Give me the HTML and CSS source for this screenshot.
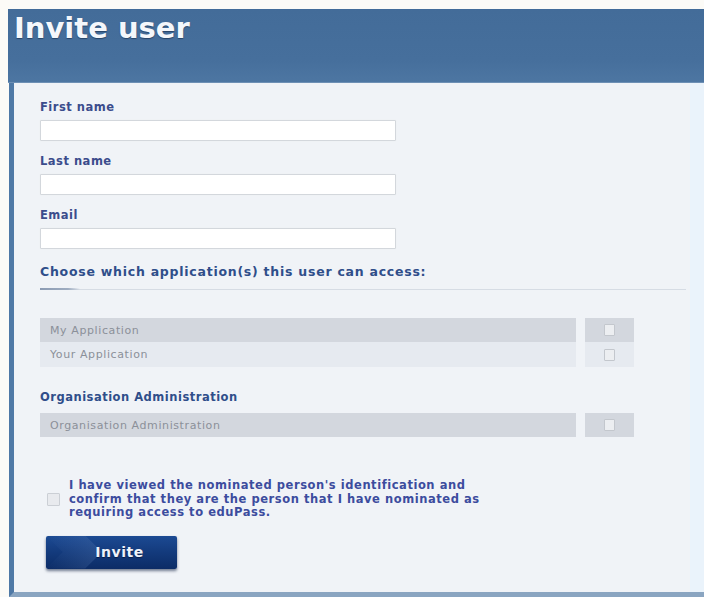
FILE: index.html
```html
<!DOCTYPE html>
<html lang="en">
<head>
<meta charset="utf-8">
<title>Invite user</title>
<link rel="stylesheet" href="styles.css">
</head>
<body>
<div class="page">
  <header class="title-bar">
    <h1>Invite user</h1>
  </header>

  <form class="panel">
    <div class="field">
      <label class="field-label" for="first">First name</label>
      <input class="text-input" id="first" type="text">
    </div>
    <div class="field">
      <label class="field-label" for="last">Last name</label>
      <input class="text-input" id="last" type="text">
    </div>
    <div class="field field-last">
      <label class="field-label" for="email">Email</label>
      <input class="text-input" id="email" type="text">
    </div>

    <h2 class="section-title">Choose which application(s) this user can access:</h2>
    <div class="rule"></div>

    <div class="app-list">
      <div class="app-row shade">
        <span class="app-name">My Application</span>
        <span class="app-check"><input type="checkbox" class="box"></span>
      </div>
      <div class="app-row light">
        <span class="app-name">Your Application</span>
        <span class="app-check"><input type="checkbox" class="box"></span>
      </div>
    </div>

    <h3 class="group-title">Organisation Administration</h3>
    <div class="app-list">
      <div class="app-row shade">
        <span class="app-name">Organisation Administration</span>
        <span class="app-check"><input type="checkbox" class="box"></span>
      </div>
    </div>

    <label class="confirm">
      <input type="checkbox" class="box confirm-box">
      <span class="confirm-text">I have viewed the nominated person's identification and<br>confirm that they are the person that I have nominated as<br>requiring access to eduPass.</span>
    </label>

    <button type="button" class="invite-btn"><span>Invite</span></button>
  </form>
</div>
</body>
</html>
```

FILE: styles.css
```css
* {
  box-sizing: border-box;
}

body {
  margin: 0;
  background: #fcfbf7;
  font-family: "DejaVu Sans", Verdana, sans-serif;
}

.page {
  padding-top: 9px;
}

/* blue title band */
.title-bar {
  margin-left: 8px;
  height: 74px;
  background: linear-gradient(to bottom, #436c99 0%, #466f9c 70%, #4d76a2 100%);
  border-bottom: 1px solid #6e90b5;
}

.title-bar h1 {
  margin: 0;
  padding: 2px 0 0 6px;
  font-size: 29px;
  line-height: 34px;
  font-weight: bold;
  color: #f4f7fb;
  text-shadow: 0 1px 1px rgba(20, 40, 70, 0.6);
}

/* form body; the pale strip down the right edge is part of the background */
.panel {
  margin: 0 0 0 9px;
  padding: 17px 0 23px 26px;
  background: linear-gradient(to right, #f0f3f7 calc(100% - 14px), #eaf3fb calc(100% - 14px));
  border-left: 5px solid #4f79a6;
  border-bottom: 5px solid #8aa5c1;
  display: flex;
  flex-direction: column;
  align-items: flex-start;
}

.field {
  display: flex;
  flex-direction: column;
  margin-bottom: 13px;
}

.field-last {
  margin-bottom: 0;
}

.field-label {
  font-size: 11.5px;
  letter-spacing: 0.5px;
  line-height: 14px;
  font-weight: bold;
  color: #3b4c8c;
  margin-bottom: 6px;
}

.text-input {
  width: 356px;
  height: 21px;
  background: #fff;
  border: 1px solid #d3d7dc;
  border-radius: 1px;
  box-shadow: 0 0 1px #e3e6ea;
  margin: 0;
}

.section-title {
  margin: 15px 0 0;
  font-size: 12.5px;
  letter-spacing: 0.75px;
  line-height: 16px;
  font-weight: bold;
  color: #2f4e8a;
}

.rule {
  margin-top: 9px;
  width: 646px;
  height: 1px;
  background: #d6dce4;
  position: relative;
}

.rule::before {
  content: "";
  position: absolute;
  left: 0;
  top: -1px;
  width: 40px;
  height: 2px;
  background: linear-gradient(to right, #8b9bb3, #9fadc1 70%, rgba(160, 174, 194, 0));
}

.app-list {
  margin-top: 28px;
  display: flex;
  flex-direction: column;
}

.app-row {
  display: grid;
  grid-template-columns: 536px 49px;
  column-gap: 9px;
  height: 24px;
}

.app-row + .app-row {
  height: 25px;
}

.app-name {
  display: flex;
  align-items: center;
  padding-left: 10px;
  font-size: 11px;
  letter-spacing: 0.6px;
  color: #8b9099;
}

.app-check {
  display: flex;
  align-items: center;
  justify-content: center;
}

.shade .app-name,
.shade .app-check {
  background: #d3d7de;
}

.light .app-name,
.light .app-check {
  background: #e6eaf0;
}

.box {
  appearance: none;
  -webkit-appearance: none;
  margin: 0;
  width: 11px;
  height: 12px;
  background: #eceef1;
  border: 1px solid #c3c7cd;
  border-radius: 1px;
}

.group-title {
  margin: 23px 0 0;
  font-size: 11.5px;
  letter-spacing: 0.5px;
  line-height: 14px;
  font-weight: bold;
  color: #2f4e8a;
}

.group-title + .app-list {
  margin-top: 9px;
}

.confirm {
  margin-top: 42px;
  display: flex;
  align-items: center;
  gap: 9px;
  padding-left: 7px;
}

.confirm-box {
  width: 13px;
  height: 13px;
  background: #e8eaee;
  border-color: #cbcfd5;
}

.confirm-text {
  font-size: 11.5px;
  letter-spacing: 0.55px;
  line-height: 13.5px;
  font-weight: bold;
  color: #3c4c9e;
}

.invite-btn {
  margin: 16px 0 0 6px;
  width: 131px;
  height: 33px;
  border: 0;
  border-radius: 2px;
  padding: 0 0 0 16px;
  position: relative;
  overflow: hidden;
  background: linear-gradient(to bottom, #1c4a93 0%, #133a7c 50%, #0c2c66 100%);
  box-shadow: 0 2px 3px rgba(10, 25, 60, 0.55);
  font-family: "DejaVu Sans", Verdana, sans-serif;
  font-size: 14px;
  letter-spacing: 0.5px;
  font-weight: bold;
  color: #eef2fa;
  text-shadow: 0 1px 1px rgba(0, 10, 40, 0.6);
}

/* lighter chevron on the left of the button */
.invite-btn::before {
  content: "";
  position: absolute;
  left: 0;
  top: 0;
  width: 56px;
  height: 100%;
  background: linear-gradient(to right, rgba(90, 125, 180, 0.0), rgba(90, 125, 180, 0.3));
  clip-path: polygon(0 0, 70% 0, 100% 50%, 70% 100%, 0 100%, 30% 50%);
}

.invite-btn span {
  position: relative;
}
```
